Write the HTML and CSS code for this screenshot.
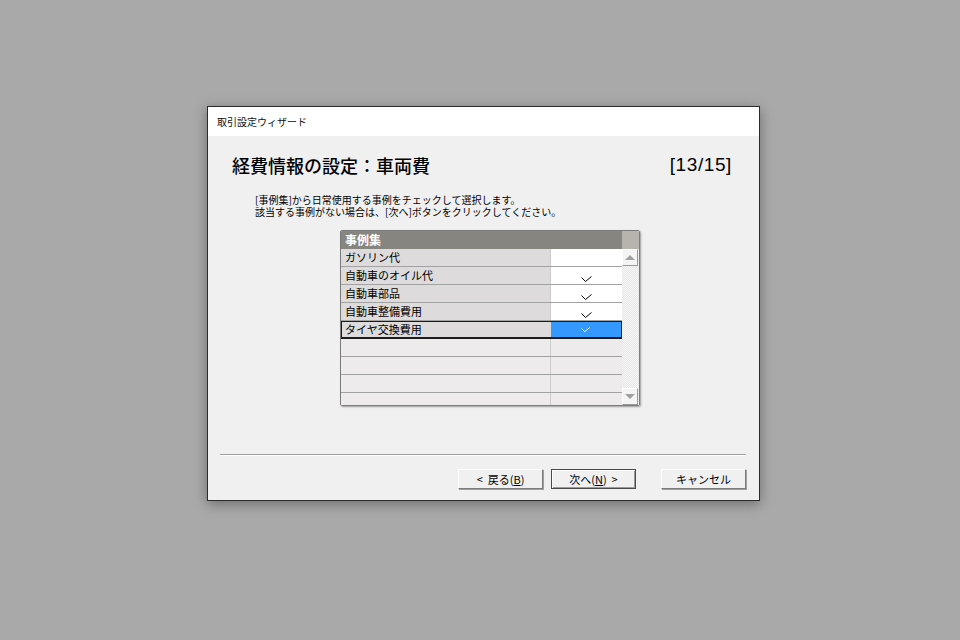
FILE: index.html
```html
<!DOCTYPE html>
<html lang="ja">
<head>
<meta charset="utf-8">
<title>取引設定ウィザード</title>
<link rel="stylesheet" href="styles.css">
</head>
<body>
<div class="dialog">
  <div class="titlebar">取引設定ウィザード</div>
  <div class="content">
    <div class="heading">
      <span class="heading-title">経費情報の設定：車両費</span>
      <span class="heading-step">[13/15]</span>
    </div>
    <div class="instructions">
      <div class="line">[事例集]から日常使用する事例をチェックして選択します。</div>
      <div class="line">該当する事例がない場合は、[次へ]ボタンをクリックしてください。</div>
    </div>
    <div class="grid">
      <div class="grid-body">
        <div class="row header"><div class="c1">事例集</div></div>
        <div class="row data"><div class="c1">ガソリン代</div><div class="c2"></div></div>
        <div class="row data"><div class="c1">自動車のオイル代</div><div class="c2"><svg class="check" viewBox="0 0 12 7" width="12" height="7"><polyline points="0.5,1.5 4.5,5.5 10.5,0.5" fill="none" stroke="#000" stroke-width="1"/></svg></div></div>
        <div class="row data"><div class="c1">自動車部品</div><div class="c2"><svg class="check" viewBox="0 0 12 7" width="12" height="7"><polyline points="0.5,1.5 4.5,5.5 10.5,0.5" fill="none" stroke="#000" stroke-width="1"/></svg></div></div>
        <div class="row data"><div class="c1">自動車整備費用</div><div class="c2"><svg class="check" viewBox="0 0 12 7" width="12" height="7"><polyline points="0.5,1.5 4.5,5.5 10.5,0.5" fill="none" stroke="#000" stroke-width="1"/></svg></div></div>
        <div class="row data selected"><div class="c1">タイヤ交換費用</div><div class="c2"><div class="focus"><svg class="check-sel" viewBox="0 0 12 7" width="10" height="6"><polyline points="0.5,1.5 4.5,5.5 10.5,0.5" fill="none" stroke="#fff" stroke-width="1.2"/></svg></div></div></div>
        <div class="row empty"><div class="c1"></div><div class="c2"></div></div>
        <div class="row empty"><div class="c1"></div><div class="c2"></div></div>
        <div class="row empty"><div class="c1"></div><div class="c2"></div></div>
        <div class="row empty last"><div class="c1"></div><div class="c2"></div></div>
      </div>
      <div class="scrollbar">
        <div class="sb-corner"></div>
        <div class="sb-btn"><span class="arrow-up"></span></div>
        <div class="sb-track"></div>
        <div class="sb-btn"><span class="arrow-down"></span></div>
      </div>
    </div>
    <div class="separator"></div>
    <div class="buttons">
      <button class="btn">&lt;&nbsp; 戻る(<u>B</u>)</button>
      <button class="btn default">次へ(<u>N</u>)&nbsp; &gt;</button>
      <button class="btn cancel">キャンセル</button>
    </div>
  </div>
</div>
</body>
</html>
```
FILE: styles.css
```css
html, body {
  margin: 0;
  padding: 0;
}
body {
  background: #a9a9a9;
  width: 960px;
  height: 640px;
  overflow: hidden;
  font-family: "Noto Sans CJK JP", "Noto Sans", sans-serif;
  color: #000;
}
.dialog {
  margin: 106px 0 0 207px;
  width: 551px;
  height: 393px;
  border: 1px solid #2b2b2b;
  background: #f0f0f0;
  box-shadow: 0 3px 12px rgba(0, 0, 0, 0.35);
  display: flex;
  flex-direction: column;
}
.titlebar {
  height: 29px;
  background: #fff;
  font-size: 10px;
  line-height: 29px;
  padding-left: 9px;
  color: #111;
}
.content {
  flex: 1;
  display: flex;
  flex-direction: column;
}
.heading {
  display: flex;
  justify-content: space-between;
  align-items: center;
  padding: 17px 27px 0 24px;
  height: 24px;
}
.heading-title {
  font-size: 18px;
  font-weight: 500;
  line-height: 24px;
}
.heading-step {
  font-family: "Liberation Sans", Arial, sans-serif;
  font-size: 19px;
  letter-spacing: 0.6px;
  line-height: 24px;
}
.instructions {
  margin: 17px 0 0 47px;
  font-size: 10px;
  line-height: 12px;
  display: flex;
  flex-direction: column;
}
.instructions .line {
  height: 12px;
  white-space: nowrap;
}
.grid {
  margin: 12px 0 0 132px;
  width: 298px;
  height: 174px;
  border: 1px solid #7c7c7c;
  border-radius: 2px;
  box-shadow: 1px 1px 2px rgba(0, 0, 0, 0.35);
  display: flex;
  overflow: hidden;
}
.grid-body {
  width: 281px;
  display: flex;
  flex-direction: column;
}
.row {
  display: flex;
  height: 18px;
  flex: none;
  box-sizing: border-box;
  border-bottom: 1px solid #a2a2a2;
  font-size: 11px;
  line-height: 17px;
}
.row.last {
  height: 12px;
  border-bottom: none;
}
.row .c1 {
  width: 210px;
  flex: none;
  padding-left: 4px;
  box-sizing: border-box;
  border-right: 1px solid #cbcbcb;
  white-space: nowrap;
}
.row .c2 {
  flex: 1;
  display: flex;
  justify-content: center;
  align-items: flex-end;
}
.row.header {
  background: #868580;
  border-bottom: none;
  color: #fff;
  font-weight: bold;
  font-size: 12px;
}
.row.header .c1 {
  border-right: none;
  width: 100%;
}
.row.data .c1 {
  background: #dddbdb;
}
.row.data .c2 {
  background: #fff;
}
.check {
  margin-bottom: 1px;
}
.row.empty {
  background: #edebeb;
}
.row.selected {
  border: 1px solid #1b1b1b;
  border-bottom-width: 2px;
}
.row.selected .c1 {
  width: 209px;
  border-right: none;
  padding-left: 3px;
  line-height: 15px;
}
.row.selected .c2 {
  background: #3399ff;
  align-items: center;
}
.focus {
  flex: none;
  width: 14px;
  height: 13px;
  box-sizing: border-box;
  border: 1px dotted #e07020;
  display: flex;
  justify-content: center;
  align-items: center;
}
.scrollbar {
  width: 17px;
  display: flex;
  flex-direction: column;
  background: repeating-conic-gradient(#f7f7f7 0 25%, #e6e6e6 0 50%) 0 0 / 2px 2px;
}
.sb-corner {
  height: 18px;
  background: #b7b4ae;
}
.sb-btn {
  height: 17px;
  width: 16px;
  box-sizing: border-box;
  background: #f4f4f4;
  border: 1px solid #fff;
  border-right-color: #9a9a9a;
  border-bottom-color: #9a9a9a;
  display: flex;
  justify-content: center;
  align-items: center;
}
.sb-track {
  flex: 1;
}
.arrow-up {
  width: 0;
  height: 0;
  border-left: 5px solid transparent;
  border-right: 5px solid transparent;
  border-bottom: 5px solid #a0a0a0;
}
.arrow-down {
  width: 0;
  height: 0;
  border-left: 5px solid transparent;
  border-right: 5px solid transparent;
  border-top: 5px solid #a0a0a0;
}
.separator {
  margin: 48px 0 0 12px;
  width: 526px;
  height: 0;
  border-top: 1px solid #a0a0a0;
  border-bottom: 1px solid #fff;
}
.buttons {
  display: flex;
  margin: 13px 0 0 250px;
  gap: 8px;
}
.btn {
  width: 85px;
  height: 20px;
  padding: 0;
  box-sizing: border-box;
  font-family: "Noto Sans CJK JP", "Noto Sans", sans-serif;
  font-size: 11px;
  line-height: 16px;
  color: #000;
  background: #f0f0f0;
  border: 1px solid;
  border-color: #fff #7a7a7a #7a7a7a #fff;
  box-shadow: 1px 1px 0 #a0a0a0;
}
.btn.default {
  border-color: #4a4a4a;
  box-shadow: inset 1px 1px 0 #fff, inset -1px -1px 0 #9a9a9a;
}
.btn.cancel {
  margin-left: 17px;
}
.btn u {
  text-decoration: underline;
}
```
